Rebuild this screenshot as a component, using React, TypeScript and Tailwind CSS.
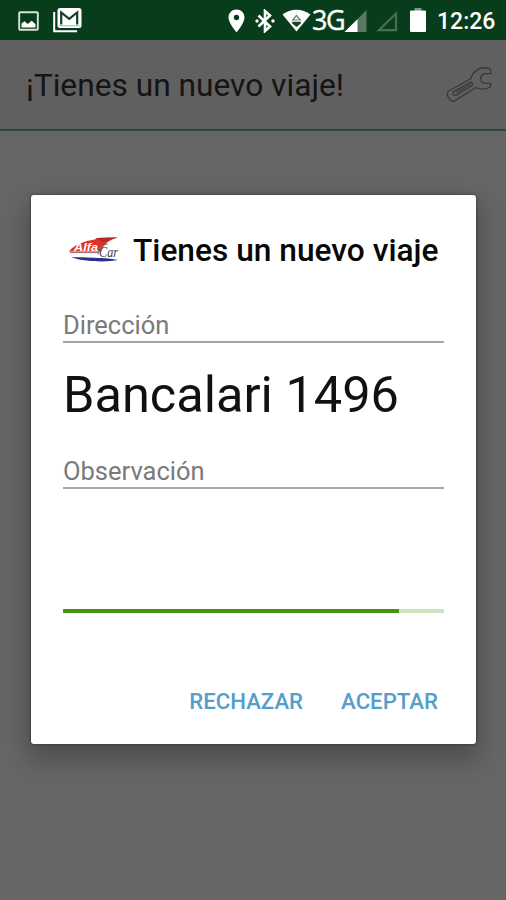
import type { ReactNode } from 'react'

const PROGRESS = 88.2

function StatusBar() {
  return (
    <div className="flex h-10 items-center bg-[#083d1b] pt-px text-white">
      {/* Notifications */}
      <svg className="ml-[18px] h-5 w-[21px] shrink-0" viewBox="0 0 21 20" fill="none">
        <rect x="1.2" y="1.2" width="18.6" height="17.6" rx="1" stroke="#d5e3d8" strokeWidth="1.9" />
        <path d="M3.5 16.5v-4l3-2.2 3.2 2.6 4-3.2 3.8 3.6v3.2z" fill="#fff" />
      </svg>
      <svg className="mb-px ml-[14px] h-[26px] w-[29px] shrink-0" viewBox="0 0 29 26" fill="none">
        <path d="M1.2 5v19.3H24" stroke="#fff" strokeWidth="2" />
        <rect x="4.5" y="1" width="24" height="20" rx="2.5" fill="#fff" />
        <path d="M8.200 17.500V5.500l8 6.300 8-6.300v12" stroke="#153f26" strokeWidth="2.200" />
        <path d="M6 18.800h20.500" stroke="#9db3a3" strokeWidth="1" />
      </svg>

      {/* System icons */}
      <svg className="ml-auto h-6 w-[17px] shrink-0" viewBox="0 0 17 24">
        <path fill="#fff" fillRule="evenodd" d="M8.500 0.500C4 .5.5 4 .5 8.500c0 5.800 8 14.800 8 14.800s8-9 8-14.800C16.500 4 13 .5 8.500.5zm0 5.300a2.700 2.700 0 1 1 0 5.400 2.700 2.700 0 0 1 0-5.400z" />
      </svg>
      <svg className="ml-[10px] h-6 w-5 shrink-0" viewBox="0 0 20 24" fill="none">
        <path d="M3.500 6.500 15 17.500l-5 4.500V2l5 4.500-11.500 11" stroke="#fff" strokeWidth="2.600" />
        <circle cx="2" cy="12" r="1.700" fill="#fff" />
        <circle cx="18" cy="12" r="1.700" fill="#fff" />
      </svg>
      <svg className="ml-[7px] h-[23px] w-[29px] shrink-0" viewBox="0 0 29 23">
        <path d="M.5 5.500C8.500-.9 20.500-.9 28.500 5.500L14.500 22.500z" fill="#fff" />
        <path d="m14.500 6.500 3.800 4.500h-7.600z" fill="none" stroke="#6c8474" strokeWidth="1.200" />
        <path d="M10.200 12.800h8.600v1.700l-4.300 3.400-4.300-3.400z" fill="#17402a" />
      </svg>
      <span className="mb-[2px] ml-px w-[32px] shrink-0 font-['Open_Sans',sans-serif] text-[27px] leading-none tracking-[-1.500px] [-webkit-text-stroke:0.4px_white]">
        3G
      </span>
      <svg className="h-[22px] w-[23px] shrink-0" viewBox="0 0 23 22">
        <path d="M22.500 0v22H.5z" fill="#587a63" />
        <path d="M13.500 9.200V22H.5z" fill="#fff" />
      </svg>
      <svg className="ml-[8px] h-[22px] w-[23px] shrink-0" viewBox="0 0 23 22">
        <path d="M21 3.500v16.700H4z" fill="none" stroke="#477053" strokeWidth="2.200" />
      </svg>
      <svg className="mb-px ml-[12px] h-6 w-4 shrink-0" viewBox="0 0 16 24">
        <path d="M4.500 0h7v3h-7z" fill="#7b9883" />
        <rect y="2.500" width="16" height="21.500" rx="1" fill="#fff" />
      </svg>
      <span className="mt-px mr-[12px] ml-[11px] w-[57px] shrink-0 text-[23px] leading-none font-medium">12:26</span>
    </div>
  )
}

function Wrench() {
  return (
    <svg className="h-[37px] w-[48px]" viewBox="0 0 48 37" fill="none" stroke="#3a3a3a" strokeWidth="1.400" strokeLinejoin="round">
      <path d="M3 25.500 26 12.500C27.500 6 33 1.500 40 1.800c2.500.2 5 1 5.700 2.200v3.500l-7 .3c-4 2-4 6.700-.5 9.200l7.500.4-.3 3.600c-4.500 2.500-10.500 2.800-14.500.5L9 35.300C5.500 35.500.5 29.500 3 25.500z" />
      <path d="M8.500 25.800 25 16.300c2.500-.5 3.200 2.500 1.500 3.700L11.500 29c-3 .8-4.800-1.500-3-3.200zM11.500 26.500l14-8" />
    </svg>
  )
}

function AlfaCarLogo() {
  return (
    <svg className="h-[27px] w-[52px] shrink-0" viewBox="0 0 52 27">
      <path d="M0 14.500C6 6 24 .5 49 .5c-8 2.500-14 5.700-17 14z" fill="#df3528" />
      <path d="M26 1.300c7-.8 15-.8 23-.8-7 1.400-11 3-14 5z" fill="#b62927" />
      <path d="M1 15.500h29" stroke="#9a7776" strokeWidth="1.200" />
      <path d="M2 20c12 .7 32 0 47 3-11 2.500-36 1.800-47-3z" fill="#28308c" />
      <path d="M29 17.500c1.500-7 5-10 10-10.500" fill="none" stroke="#777" strokeWidth="1" />
      <text x="5" y="13.500" textLength="24" lengthAdjust="spacingAndGlyphs" fill="#fff" className="font-['Liberation_Sans',sans-serif] text-[10.500px] font-bold italic">
        Alfa
      </text>
      <text x="30" y="20" textLength="19" lengthAdjust="spacingAndGlyphs" fill="#3d3d3d" className="font-['Liberation_Serif',serif] text-[15px] italic">
        Car
      </text>
    </svg>
  )
}

function FieldLabel({ children }: { children: ReactNode }) {
  return (
    <div className="h-[33px] border-b-2 border-[#a6a6a6] text-[25.500px] leading-[31px] text-[#7a7a7a]">
      {children}
    </div>
  )
}

function TripDialog() {
  return (
    <div className="absolute top-[195px] left-[31px] flex h-[549px] w-[445px] flex-col rounded-[3px] bg-white px-8 shadow-[0_12px_26px_4px_rgba(0,0,0,0.25),0_0_3px_rgba(0,0,0,0.5)]">
      <div className="mt-[35px] flex h-10 items-center pl-[6px]">
        <AlfaCarLogo />
        <h2 className="mt-px ml-[12px] text-[31.700px] font-medium whitespace-nowrap text-[#080808]">Tienes un nuevo viaje</h2>
      </div>

      <div className="mt-[40px]">
        <FieldLabel>Dirección</FieldLabel>
        <p className="h-[113px] pt-[22px] text-[50.500px] leading-[60px] whitespace-nowrap text-[#111]">Bancalari 1496</p>
        <FieldLabel>Observación</FieldLabel>
      </div>

      {/* Time left to answer */}
      <div className="mt-[120px] h-1 w-full bg-[#cfe2be]">
        <div className="h-full bg-[#4a930f]" style={{ width: `${PROGRESS}%` }} />
      </div>

      <div className="mt-[71px] flex justify-end gap-[38px] pr-[6px] text-[22.200px] leading-[34px] font-medium text-[#559dcb]">
        <button>RECHAZAR</button>
        <button>ACEPTAR</button>
      </div>
    </div>
  )
}

export default function App() {
  return (
    <div className="relative h-[900px] w-[506px] overflow-hidden bg-[#666] font-[Roboto,sans-serif]">
      <StatusBar />
      <header className="flex h-[91px] items-center justify-between border-b-2 border-[#204c39] bg-[#606060] pr-[13px] pl-[26px]">
        <h1 className="mt-[2px] text-[31.700px] whitespace-nowrap text-[#141414]">¡Tienes un nuevo viaje!</h1>
        <Wrench />
      </header>
      <TripDialog />
    </div>
  )
}
